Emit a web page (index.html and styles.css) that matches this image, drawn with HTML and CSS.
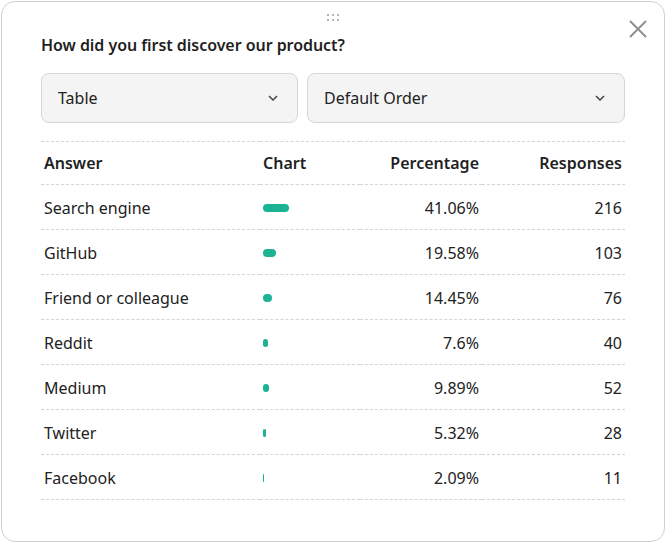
FILE: index.html
```html
<!DOCTYPE html>
<html>
<head>
<meta charset="utf-8">
<link rel="stylesheet" href="styles.css">
</head>
<body>
<div class="card">
  <div class="handle">
    <span></span><span></span><span></span><span></span><span></span><span></span>
  </div>
  <button class="close" aria-label="Close">
    <svg width="18" height="18" viewBox="0 0 18 18"><path d="M1 1 L17 17 M17 1 L1 17" stroke="#8c8c8c" stroke-width="1.8" fill="none"/></svg>
  </button>
  <h2 class="title">How did you first discover our product?</h2>
  <div class="selects">
    <div class="select"><span>Table</span><svg class="chev" width="10" height="6" viewBox="0 0 10 6"><path d="M1 1 L5 5 L9 1" stroke="#444" stroke-width="1.5" fill="none"/></svg></div>
    <div class="select"><span>Default Order</span><svg class="chev" width="10" height="6" viewBox="0 0 10 6"><path d="M1 1 L5 5 L9 1" stroke="#444" stroke-width="1.5" fill="none"/></svg></div>
  </div>
  <table class="results">
    <colgroup>
      <col class="c-answer"><col class="c-chart"><col class="c-pct"><col class="c-resp">
    </colgroup>
    <thead>
      <tr><th class="l">Answer</th><th class="l">Chart</th><th class="r">Percentage</th><th class="r">Responses</th></tr>
    </thead>
    <tbody>
      <tr><td>Search engine</td><td><div class="track"><div class="bar" style="width:41.06%"></div></div></td><td class="r">41.06%</td><td class="r">216</td></tr>
      <tr><td>GitHub</td><td><div class="track"><div class="bar" style="width:19.58%"></div></div></td><td class="r">19.58%</td><td class="r">103</td></tr>
      <tr><td>Friend or colleague</td><td><div class="track"><div class="bar" style="width:14.45%"></div></div></td><td class="r">14.45%</td><td class="r">76</td></tr>
      <tr><td>Reddit</td><td><div class="track"><div class="bar" style="width:7.6%"></div></div></td><td class="r">7.6%</td><td class="r">40</td></tr>
      <tr><td>Medium</td><td><div class="track"><div class="bar" style="width:9.89%"></div></div></td><td class="r">9.89%</td><td class="r">52</td></tr>
      <tr><td>Twitter</td><td><div class="track"><div class="bar" style="width:5.32%"></div></div></td><td class="r">5.32%</td><td class="r">28</td></tr>
      <tr><td>Facebook</td><td><div class="track"><div class="bar" style="width:2.09%"></div></div></td><td class="r">2.09%</td><td class="r">11</td></tr>
    </tbody>
  </table>
</div>
</body>
</html>
```

FILE: styles.css
```css
html, body {
  margin: 0;
  padding: 0;
  background: #fff;
}
body {
  font-family: "Noto Sans", "Open Sans", sans-serif;
  color: #222;
  padding: 1px;
}
.card {
  position: relative;
  box-sizing: border-box;
  width: 664px;
  height: 541px;
  border: 1px solid #d0d0d0;
  border-radius: 14px;
  padding: 32px 39px 0 39px;
  background: #fff;
}
.handle {
  position: absolute;
  top: 12px;
  left: 325px;
  display: grid;
  grid-template-columns: repeat(3, 2px);
  grid-auto-rows: 2px;
  gap: 3px;
}
.handle span {
  background: #b5b5b5;
  width: 2px;
  height: 2px;
}
.close {
  position: absolute;
  top: 18px;
  right: 17px;
  width: 18px;
  height: 18px;
  padding: 0;
  border: 0;
  background: none;
  display: block;
}
.close svg { display: block; }
.title {
  margin: 0;
  font-size: 16px;
  line-height: 22px;
  font-weight: 600;
  color: #1f1f1f;
  letter-spacing: -0.05px;
}
.selects {
  margin-top: 17px;
  display: grid;
  grid-template-columns: 257px 1fr;
  gap: 9px;
}
.select {
  box-sizing: border-box;
  height: 50px;
  background: #f4f4f4;
  border: 1px solid #d6d6d6;
  border-radius: 8px;
  display: flex;
  align-items: center;
  justify-content: space-between;
  padding: 0 19px 0 16px;
  font-size: 16px;
  color: #222;
}
.chev { display: block; }
.results {
  margin-top: 18px;
  width: 584px;
  border-collapse: collapse;
  table-layout: fixed;
  font-size: 16px;
}
.c-answer { width: 219px; }
.c-chart { width: 100px; }
.c-pct { width: 122px; }
.c-resp { width: 143px; }
.results th, .results td {
  padding: 0 3px;
  border-bottom: 1px dashed #d4d4d4;
  white-space: nowrap;
}
.results thead tr { border-top: 1px dashed #d4d4d4; }
.results th {
  height: 42px;
  font-weight: 600;
  color: #1f1f1f;
}
.results td {
  box-sizing: border-box;
  height: 45px;
  padding-top: 2px;
}
.l { text-align: left; }
.r { text-align: right; }
.track {
  width: 64px;
  height: 8px;
}
.bar {
  height: 8px;
  border-radius: 4px;
  background: #1bb393;
}
```
